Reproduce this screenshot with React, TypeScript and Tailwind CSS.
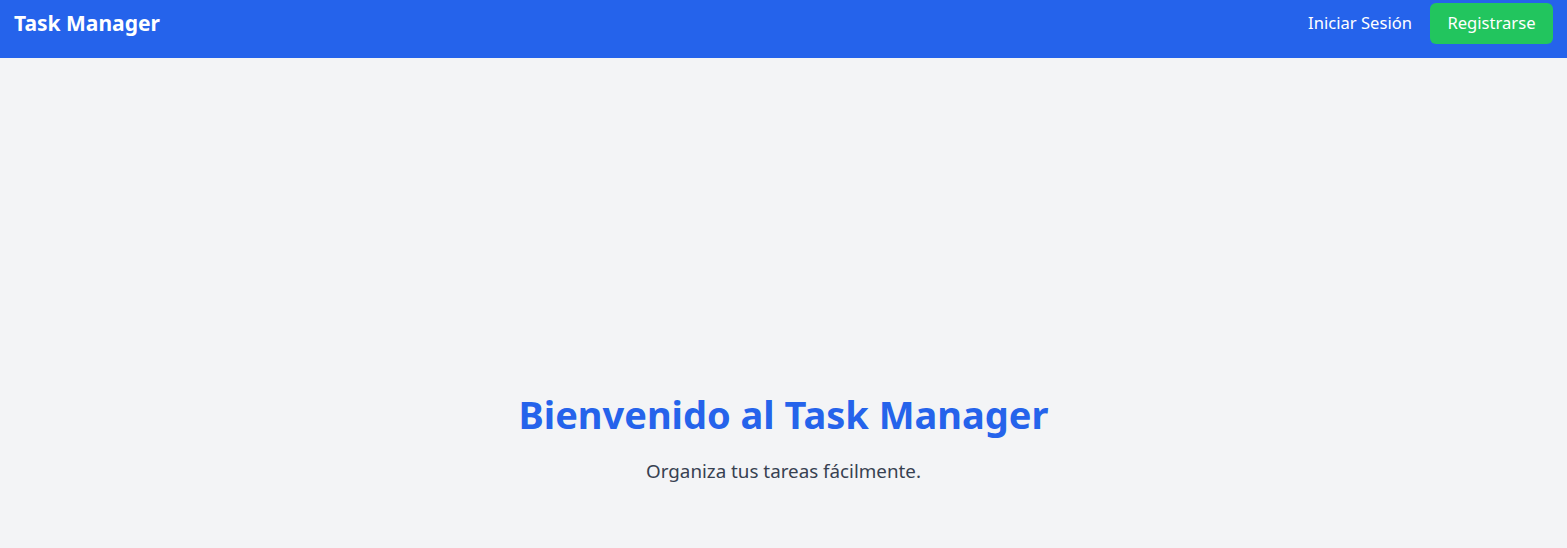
export default function App() {
  return (
    <div
      className="flex min-h-screen flex-col bg-[#f3f4f6]"
      style={{ fontFamily: '"Noto Sans", "Open Sans", sans-serif' }}
    >
      <nav className="bg-[#2563eb] px-[14px] pb-[14px] pt-[3px]">
        <div className="flex h-[41px] items-center justify-between">
          <h1 className="text-[21px] font-bold text-white">Task Manager</h1>
          <div className="flex items-center gap-[18px]">
            <a href="#" className="text-[16.6px] text-white">
              Iniciar Sesión
            </a>
            <button className="h-[41px] w-[123px] rounded-md bg-[#22c55e] text-[16.6px] text-white">
              Registrarse
            </button>
          </div>
        </div>
      </nav>
      <main className="flex flex-1 flex-col items-center pt-[334px]">
        <h2 className="text-[38px] font-bold leading-[44px] text-[#2563eb]">
          Bienvenido al Task Manager
        </h2>
        <p className="mt-[21px] text-[18.8px] leading-[28px] text-[#374151]">
          Organiza tus tareas fácilmente.
        </p>
      </main>
    </div>
  );
}
